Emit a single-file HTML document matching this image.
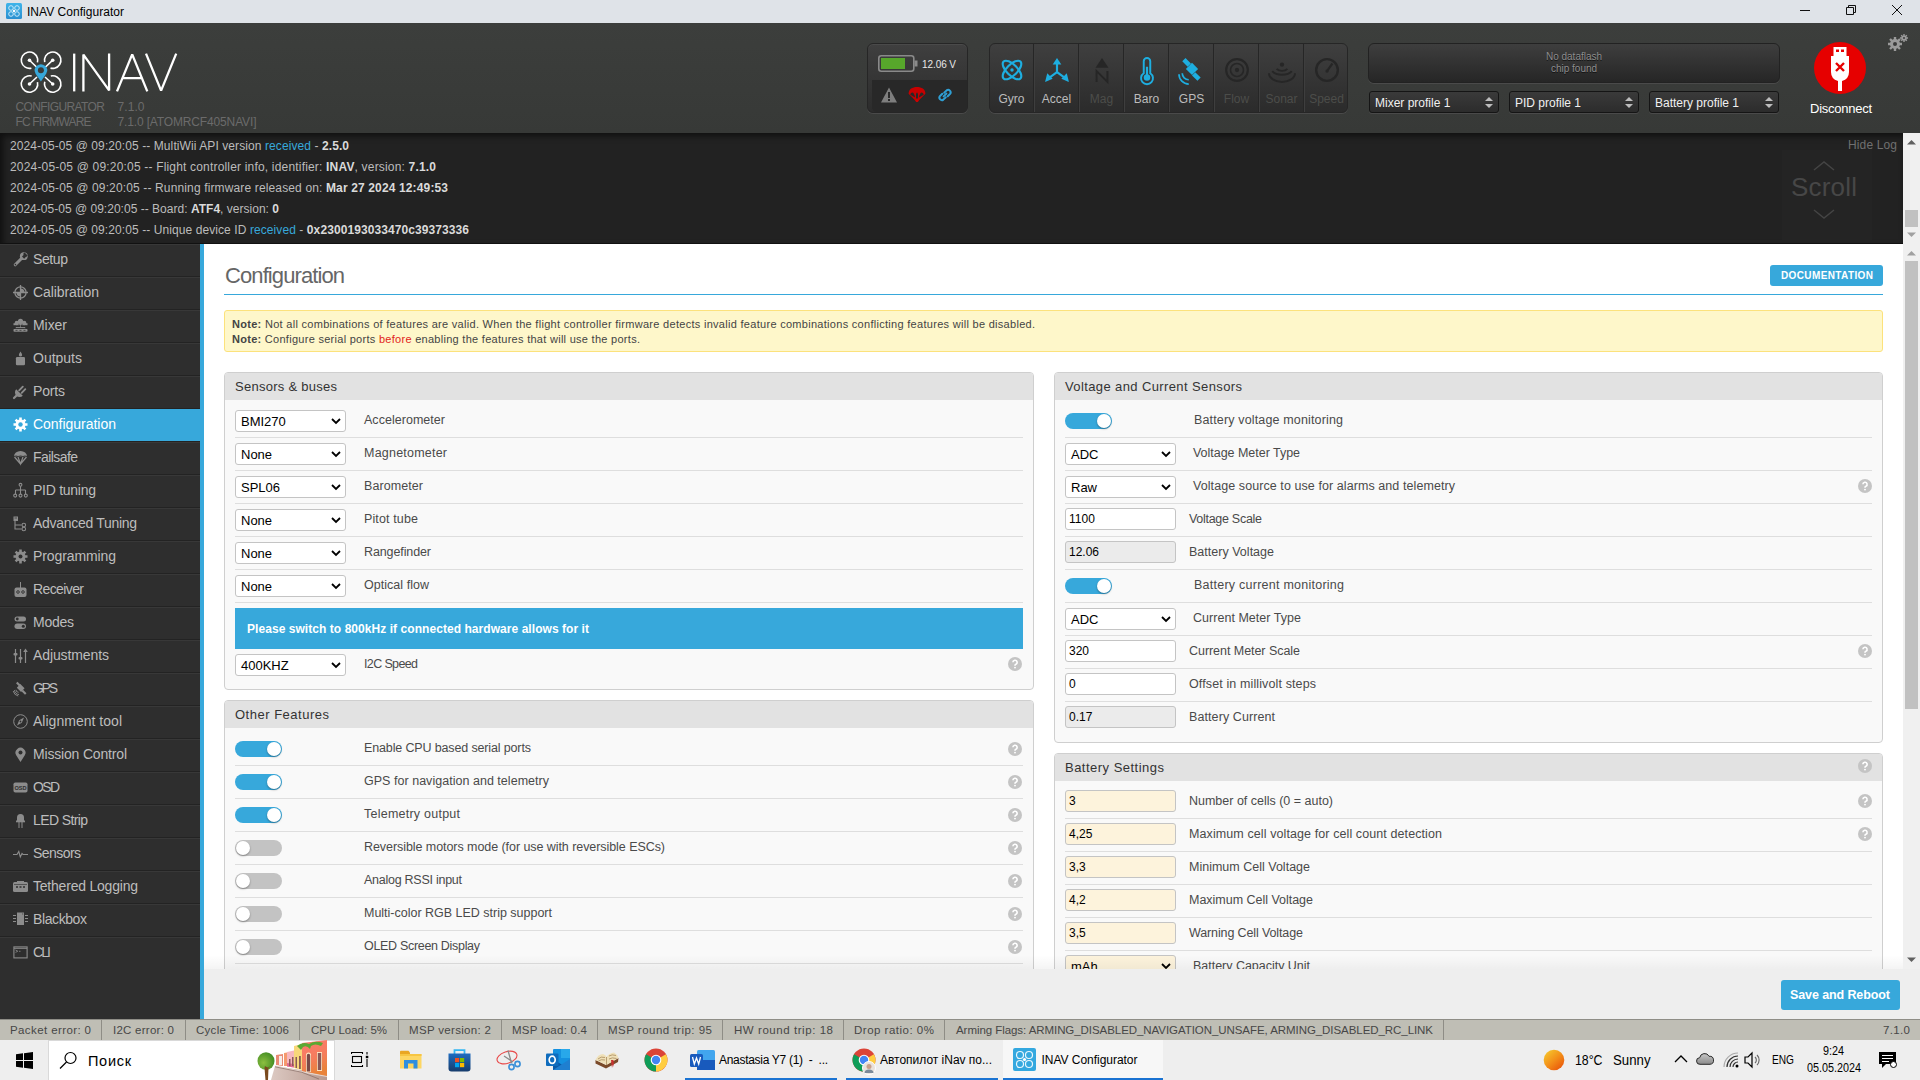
<!DOCTYPE html>
<html><head><meta charset="utf-8"><style>
html,body{margin:0;padding:0;width:1920px;height:1080px;overflow:hidden;background:#fff;font-family:"Liberation Sans",sans-serif;}
.r{position:absolute;}
.t{position:absolute;line-height:1;white-space:nowrap;}
b{font-weight:700}
</style></head><body>
<div class="r" style="left:0px;top:0px;width:1920px;height:23px;background:#dfe3e8"></div>
<svg class="r" style="left:6px;top:3px" width="16" height="16" viewBox="0 0 16 16"><defs><linearGradient id="ig" x1="0" y1="0" x2="0" y2="1"><stop offset="0" stop-color="#3fb4ea"/><stop offset="1" stop-color="#2a8fd0"/></linearGradient></defs><rect x="0" y="0" width="16" height="16" rx="1.5" fill="url(#ig)"/><g fill="none" stroke="#d8f0fb" stroke-width="0.9"><circle cx="5" cy="5" r="2.3"/><circle cx="11" cy="5" r="2.3"/><circle cx="5" cy="11" r="2.3"/><circle cx="11" cy="11" r="2.3"/></g><circle cx="8" cy="8" r="1.2" fill="#fff"/></svg>
<div id="t1" class="t" style="left:27.0px;top:5.84px;font-size:12px;color:#000;letter-spacing:0.031px;">INAV Configurator</div>
<div class="r" style="left:1800px;top:10px;width:10px;height:1px;background:#111"></div>
<svg class="r" style="left:1844px;top:4px" width="14" height="14" viewBox="0 0 14 14"><path d="M2.5 3.5h7v7h-7z M4.5 3.5v-2h7v7h-2" fill="none" stroke="#111" stroke-width="1"/></svg>
<svg class="r" style="left:1892px;top:5px" width="10" height="10" viewBox="0 0 10 10"><path d="M0 0l10 10M10 0l-10 10" stroke="#111" stroke-width="1"/></svg>
<div class="r" style="left:0px;top:23px;width:1920px;height:110px;background:linear-gradient(#3c3e3c,#373937)"></div>
<svg class="r" style="left:15px;top:48px" width="170" height="48" viewBox="15 48 170 48">
<g fill="none" stroke="#fff" stroke-width="1.6">
<circle cx="29.5" cy="60.2" r="8.2" stroke-dasharray="42.5 9.02" transform="rotate(76.6 29.5 60.2)"/>
<circle cx="52.7" cy="60.2" r="8.2" stroke-dasharray="42.5 9.02" transform="rotate(166.6 52.7 60.2)"/>
<circle cx="29.5" cy="84" r="8.2" stroke-dasharray="42.5 9.02" transform="rotate(-13.4 29.5 84)"/>
<circle cx="52.7" cy="84" r="8.2" stroke-dasharray="42.5 9.02" transform="rotate(-103.4 52.7 84)"/>
<path d="M29.5 60.2 L37 67.5 M52.7 60.2 L45 67.5 M29.5 84 L37 77 M52.7 84 L45 77"/>
</g>
<g fill="#fff"><circle cx="29.5" cy="60.2" r="1.8"/><circle cx="52.7" cy="60.2" r="1.8"/><circle cx="29.5" cy="84" r="1.8"/><circle cx="52.7" cy="84" r="1.8"/></g>
<path d="M40.9 81.5 L35.6 73.8 A6.2 6.2 0 1 1 46.2 73.8 Z" fill="#37a8db"/><circle cx="40.9" cy="70.2" r="3" fill="#3a3b3a"/>
<g fill="none" stroke="#fff" stroke-width="2.3" stroke-linejoin="bevel">
<path d="M74.2 53.6V91.4"/><path d="M83.4 91.4V54.6L109.1 90.4V53.6"/><path d="M117 91.4L132.2 54.4L147.3 91.4M122 78.2H142.4"/><path d="M146 53.6L161.1 90.6L176.2 53.6"/>
</g></svg>
<div id="t2" class="t" style="left:15.5px;top:100.84px;font-size:12px;color:#6b6b6b;letter-spacing:-0.612px;">CONFIGURATOR</div>
<div id="t3" class="t" style="left:117.5px;top:100.84px;font-size:12px;color:#6b6b6b;letter-spacing:0.074px;">7.1.0</div>
<div id="t4" class="t" style="left:15.5px;top:115.84px;font-size:12px;color:#6b6b6b;letter-spacing:-0.822px;">FC FIRMWARE</div>
<div id="t5" class="t" style="left:117.5px;top:115.84px;font-size:12px;color:#6b6b6b;letter-spacing:-0.146px;">7.1.0 [ATOMRCF405NAVI]</div>
<div class="r" style="left:867px;top:43px;width:101px;height:70px;border-radius:6px;background:linear-gradient(#3f3f3f,#2c2c2c);box-shadow:inset 0 1px 0 #4a4a4a, 0 1px 0 #4a4a4a;border:1px solid #262626;box-sizing:border-box"></div>
<div class="r" style="left:872px;top:80px;width:95px;height:32px;background:#282828;border-radius:0 0 5px 5px"></div>
<svg class="r" style="left:877px;top:54px" width="42" height="20" viewBox="0 0 42 20"><rect x="1.8" y="1.8" width="35" height="15.5" rx="2.5" fill="none" stroke="#8a8a8a" stroke-width="1.6"/><rect x="37.5" y="6.5" width="3" height="6" fill="#8a8a8a"/><rect x="4" y="4" width="24" height="11" fill="#57a72b"/></svg>
<div id="t6" class="t" style="left:922.0px;top:59.53px;font-size:10px;color:#e8e8e8;letter-spacing:-0.081px;">12.06 V</div>
<svg class="r" style="left:880px;top:87px" width="18" height="16" viewBox="0 0 18 16"><path d="M9 0.5L17 15.5H1Z" fill="#7e7e7e"/><rect x="8" y="5" width="2" height="6" fill="#2a2a2a"/><rect x="8" y="12" width="2" height="2" fill="#2a2a2a"/></svg>
<svg class="r" style="left:908px;top:86px" width="18" height="17" viewBox="0 0 18 17"><path d="M0.6 7.8C0.6 3 4.5 1 9 1C13.5 1 17.4 3 17.4 7.8L9 16.3Z" fill="#c80000"/><g fill="#282828"><path d="M2.3 8.8Q2.6 6.3 4.6 6.4Q6.2 6.6 7.1 11.6Z"/><path d="M8.1 12.6Q7.6 6.4 9 6.4Q10.4 6.4 9.9 12.6Z"/><path d="M15.7 8.8Q15.4 6.3 13.4 6.4Q11.8 6.6 10.9 11.6Z"/></g><circle cx="9" cy="14.6" r="1.5" fill="#d00000"/></svg>
<svg class="r" style="left:937px;top:87px" width="16" height="16" viewBox="0 0 16 16"><g fill="none" stroke="#2f9fd4" stroke-width="2" stroke-linecap="round"><path d="M7.2 5.8L9.6 3.4A2.5 2.5 0 0 1 13.1 6.9L10.7 9.3"/><path d="M8.8 10.2L6.4 12.6A2.5 2.5 0 0 1 2.9 9.1L5.3 6.7"/><path d="M6.6 9.4L9.4 6.6"/></g></svg>
<div class="r" style="left:989px;top:43px;width:359px;height:70px;border-radius:6px;background:linear-gradient(#3f3f3f,#2b2b2b);border:1px solid #262626;box-sizing:border-box;box-shadow:0 1px 0 #4a4a4a"></div>
<div class="r" style="left:1033px;top:44px;width:1px;height:68px;background:#262626"></div>
<div class="r" style="left:1034px;top:44px;width:1px;height:68px;background:#3e3e3e"></div>
<div class="r" style="left:1078px;top:44px;width:1px;height:68px;background:#262626"></div>
<div class="r" style="left:1079px;top:44px;width:1px;height:68px;background:#3e3e3e"></div>
<div class="r" style="left:1123px;top:44px;width:1px;height:68px;background:#262626"></div>
<div class="r" style="left:1124px;top:44px;width:1px;height:68px;background:#3e3e3e"></div>
<div class="r" style="left:1168px;top:44px;width:1px;height:68px;background:#262626"></div>
<div class="r" style="left:1169px;top:44px;width:1px;height:68px;background:#3e3e3e"></div>
<div class="r" style="left:1213px;top:44px;width:1px;height:68px;background:#262626"></div>
<div class="r" style="left:1214px;top:44px;width:1px;height:68px;background:#3e3e3e"></div>
<div class="r" style="left:1258px;top:44px;width:1px;height:68px;background:#262626"></div>
<div class="r" style="left:1259px;top:44px;width:1px;height:68px;background:#3e3e3e"></div>
<div class="r" style="left:1303px;top:44px;width:1px;height:68px;background:#262626"></div>
<div class="r" style="left:1304px;top:44px;width:1px;height:68px;background:#3e3e3e"></div>
<div class="t" style="left:989.0px;top:92.8px;width:45px;text-align:center;font-size:12px;color:#bcbcbc">Gyro</div>
<div class="t" style="left:1034.0px;top:92.8px;width:45px;text-align:center;font-size:12px;color:#bcbcbc">Accel</div>
<div class="t" style="left:1079.0px;top:92.8px;width:45px;text-align:center;font-size:12px;color:#4c4d4a">Mag</div>
<div class="t" style="left:1124.0px;top:92.8px;width:45px;text-align:center;font-size:12px;color:#bcbcbc">Baro</div>
<div class="t" style="left:1169.0px;top:92.8px;width:45px;text-align:center;font-size:12px;color:#bcbcbc">GPS</div>
<div class="t" style="left:1214.0px;top:92.8px;width:45px;text-align:center;font-size:12px;color:#4c4d4a">Flow</div>
<div class="t" style="left:1259.0px;top:92.8px;width:45px;text-align:center;font-size:12px;color:#4c4d4a">Sonar</div>
<div class="t" style="left:1304.0px;top:92.8px;width:45px;text-align:center;font-size:12px;color:#4c4d4a">Speed</div>
<svg class="r" style="left:998.5px;top:57px;overflow:visible" width="26" height="26" viewBox="-1 -1 24 24"><g fill="none" stroke="#1eaee0" stroke-width="2"><ellipse cx="11" cy="11" rx="11" ry="5" transform="rotate(45 11 11)"/><ellipse cx="11" cy="11" rx="11" ry="5" transform="rotate(-45 11 11)"/></g><circle cx="11" cy="11" r="1.6" fill="#1eaee0"/></svg>
<svg class="r" style="left:1043.5px;top:57px;overflow:visible" width="26" height="26" viewBox="-1 -1 24 24"><g fill="#1eaee0"><path d="M11 0L15 6H7Z"/><rect x="10" y="5" width="2" height="9"/><path d="M0 22L2 14L7 19Z"/><path d="M22 22L20 14L15 19Z"/></g><path d="M11 13L4 18M11 13L18 18" stroke="#1eaee0" stroke-width="2"/></svg>
<svg class="r" style="left:1088.5px;top:57px;overflow:visible" width="26" height="26" viewBox="-1 -1 24 24"><path d="M11 0L17 9H5Z" fill="#262626"/><path d="M6 22V12L16 22V12" fill="none" stroke="#262626" stroke-width="1.8"/></svg>
<svg class="r" style="left:1133.5px;top:57px;overflow:visible" width="26" height="26" viewBox="-1 -1 24 24"><path d="M8 14V3a3 3 0 0 1 6 0V14a5.5 5.5 0 1 1-6 0Z" fill="none" stroke="#1eaee0" stroke-width="1.8"/><circle cx="11" cy="18" r="3" fill="#1eaee0"/><rect x="10" y="8" width="2" height="8" fill="#1eaee0"/></svg>
<svg class="r" style="left:1178.5px;top:57px;overflow:visible" width="26" height="26" viewBox="-1 -1 24 24"><g fill="#1eaee0"><path d="M5 0L10 5L7 8L2 3Z"/><rect x="7" y="6" width="8" height="8" transform="rotate(45 11 10)"/><path d="M14 13L19 18L16 21L11 16Z"/></g><path d="M2 14a6 6 0 0 0 6 6M-1 15a9 9 0 0 0 9 9" fill="none" stroke="#1eaee0" stroke-width="1.6"/></svg>
<svg class="r" style="left:1223.5px;top:57px;overflow:visible" width="26" height="26" viewBox="-1 -1 24 24"><circle cx="11" cy="11" r="10" fill="none" stroke="#262626" stroke-width="2"/><circle cx="11" cy="11" r="6" fill="none" stroke="#262626" stroke-width="1.5"/><circle cx="11" cy="11" r="2" fill="#262626"/></svg>
<svg class="r" style="left:1268.5px;top:57px;overflow:visible" width="26" height="26" viewBox="-1 -1 24 24"><circle cx="11" cy="6" r="2" fill="#262626"/><path d="M6 10a6 4 0 0 0 10 0M2 12a10 6 0 0 0 18 0M-1 14a12 8 0 0 0 24 0" fill="none" stroke="#262626" stroke-width="1.8"/></svg>
<svg class="r" style="left:1313.5px;top:57px;overflow:visible" width="26" height="26" viewBox="-1 -1 24 24"><circle cx="11" cy="11" r="10" fill="none" stroke="#262626" stroke-width="2.2"/><path d="M11 12L16 5" stroke="#262626" stroke-width="2"/><circle cx="11" cy="12" r="1.5" fill="#262626"/></svg>
<div class="r" style="left:1368px;top:43px;width:412px;height:40px;border-radius:6px;background:linear-gradient(#3e3e3e,#262626);border:1px solid #222;box-sizing:border-box;box-shadow:0 1px 0 #4a4a4a"></div>
<div class="t" style="left:1368px;top:51px;width:412px;text-align:center;font-size:10px;line-height:12px;color:#8e8e8e;text-shadow:0 1px 0 #111">No dataflash<br>chip found</div>
<div class="r" style="left:1369px;top:91px;width:130px;height:22px;border-radius:3px;background:linear-gradient(#3a3a3a,#2c2c2c);border:1px solid #151515;box-sizing:border-box;box-shadow:0 1px 0 #4a4a4a"></div>
<div id="t7" class="t" style="left:1375.0px;top:96.84px;font-size:12px;color:#f0f0f0;">Mixer profile 1</div>
<svg class="r" style="left:1484px;top:96px" width="10" height="13" viewBox="0 0 10 13"><path d="M1 5L5 1L9 5Z M1 8L5 12L9 8Z" fill="#bdbdbd"/></svg>
<div class="r" style="left:1509px;top:91px;width:130px;height:22px;border-radius:3px;background:linear-gradient(#3a3a3a,#2c2c2c);border:1px solid #151515;box-sizing:border-box;box-shadow:0 1px 0 #4a4a4a"></div>
<div id="t8" class="t" style="left:1515.0px;top:96.84px;font-size:12px;color:#f0f0f0;">PID profile 1</div>
<svg class="r" style="left:1624px;top:96px" width="10" height="13" viewBox="0 0 10 13"><path d="M1 5L5 1L9 5Z M1 8L5 12L9 8Z" fill="#bdbdbd"/></svg>
<div class="r" style="left:1649px;top:91px;width:130px;height:22px;border-radius:3px;background:linear-gradient(#3a3a3a,#2c2c2c);border:1px solid #151515;box-sizing:border-box;box-shadow:0 1px 0 #4a4a4a"></div>
<div id="t9" class="t" style="left:1655.0px;top:96.84px;font-size:12px;color:#f0f0f0;">Battery profile 1</div>
<svg class="r" style="left:1764px;top:96px" width="10" height="13" viewBox="0 0 10 13"><path d="M1 5L5 1L9 5Z M1 8L5 12L9 8Z" fill="#bdbdbd"/></svg>
<svg class="r" style="left:1813px;top:41px" width="54" height="54" viewBox="0 0 54 54"><circle cx="27" cy="27" r="26" fill="#e60000"/><rect x="20.5" y="6" width="13" height="9" fill="#fff"/><rect x="23" y="8.5" width="3" height="2.5" fill="#e60000"/><rect x="28" y="8.5" width="3" height="2.5" fill="#e60000"/><path d="M18 15H36V31Q36 38 29 40V50H25V40Q18 38 18 31Z" fill="#fff"/><path d="M23 22L31 30M31 22L23 30" stroke="#e60000" stroke-width="2.4"/></svg>
<div id="t10" class="t" style="left:1810.0px;top:102.00px;font-size:13px;color:#ffffff;letter-spacing:-0.257px;">Disconnect</div>
<svg class="r" style="left:1887px;top:34px" width="22" height="17" viewBox="0 0 22 17"><g fill="#9a9a9a"><circle cx="8" cy="10" r="5"/><g stroke="#9a9a9a" stroke-width="2.4"><path d="M8 3V17M1 10H15M3 5L13 15M13 5L3 15"/></g><circle cx="17" cy="4" r="2.6"/><g stroke="#9a9a9a" stroke-width="1.4"><path d="M17 0V8M13 4H21M14.2 1.2L19.8 6.8M19.8 1.2L14.2 6.8"/></g></g><circle cx="8" cy="10" r="2" fill="#3b3b3b"/><circle cx="17" cy="4" r="1" fill="#3b3b3b"/></svg>
<div class="r" style="left:0px;top:133px;width:1903px;height:111px;background:#222;box-shadow:inset 3px 3px 6px rgba(0,0,0,.55)"></div>
<div class="r" style="left:0px;top:243px;width:1903px;height:1px;background:#111"></div>
<div id="t11" class="t" style="left:10.0px;top:139.84px;font-size:12px;color:#bcbcbc;letter-spacing:0.087px;">2024-05-05 @ 09:20:05 -- MultiWii API version <span style="color:#37a8db">received</span> - <b style="color:#dadada">2.5.0</b></div>
<div id="t12" class="t" style="left:10.0px;top:160.84px;font-size:12px;color:#bcbcbc;letter-spacing:0.181px;">2024-05-05 @ 09:20:05 -- Flight controller info, identifier: <b style="color:#dadada">INAV</b>, version: <b style="color:#dadada">7.1.0</b></div>
<div id="t13" class="t" style="left:10.0px;top:181.84px;font-size:12px;color:#bcbcbc;letter-spacing:0.138px;">2024-05-05 @ 09:20:05 -- Running firmware released on: <b style="color:#dadada">Mar 27 2024 12:49:53</b></div>
<div id="t14" class="t" style="left:10.0px;top:202.84px;font-size:12px;color:#bcbcbc;letter-spacing:0.019px;">2024-05-05 @ 09:20:05 -- Board: <b style="color:#dadada">ATF4</b>, version: <b style="color:#dadada">0</b></div>
<div id="t15" class="t" style="left:10.0px;top:223.84px;font-size:12px;color:#bcbcbc;letter-spacing:0.085px;">2024-05-05 @ 09:20:05 -- Unique device ID <span style="color:#37a8db">received</span> - <b style="color:#dadada">0x2300193033470c39373336</b></div>
<div id="t16" class="t" style="left:1848.0px;top:138.84px;font-size:12px;color:#707070;letter-spacing:0.136px;">Hide Log</div>
<div class="r" style="left:1782px;top:150px;width:90px;height:90px;background:#242424"></div>
<div id="t17" class="t" style="left:1791.0px;top:173.99px;font-size:26px;color:#474747;letter-spacing:0.197px;">Scroll</div>
<svg class="r" style="left:1812px;top:160px" width="24" height="60" viewBox="0 0 24 60"><path d="M2 10L12 2L22 10M2 50L12 58L22 50" fill="none" stroke="#444" stroke-width="1.5"/></svg>
<div class="r" style="left:1903px;top:133px;width:17px;height:111px;background:#f0f0f0"></div>
<svg class="r" style="left:1906px;top:139px" width="11" height="6" viewBox="0 0 11 6"><path d="M1 5.5L5.5 1L10 5.5Z" fill="#606060"/></svg>
<div class="r" style="left:1905px;top:210px;width:13px;height:17px;background:#c1c1c1"></div>
<svg class="r" style="left:1906px;top:232px" width="11" height="6" viewBox="0 0 11 6"><path d="M1 0.5L5.5 5L10 0.5Z" fill="#a0a0a0"/></svg>
<div class="r" style="left:0px;top:244px;width:200px;height:776px;background:#2e2e2e"></div>
<div class="r" style="left:200px;top:244px;width:4px;height:776px;background:#37a8db"></div>
<div class="r" style="left:0px;top:244px;width:200px;height:1px;background:#383838"></div>
<div class="r" style="left:0px;top:276px;width:200px;height:1px;background:#232323"></div>
<div id="t18" class="t" style="left:33.0px;top:252.15px;font-size:14px;color:#bdbdbd;letter-spacing:-0.398px;">Setup</div>
<svg class="r" style="left:13px;top:252px;overflow:visible" width="15" height="15" viewBox="0 0 15 15"><path d="M2.2 12.8L9 6" stroke="#8c8c8c" stroke-width="3" stroke-linecap="round"/><circle cx="10.8" cy="4.2" r="3.9" fill="#8c8c8c"/><path d="M11.5 0.5L14.5 3.5L13 5L10 2Z" fill="#2e2e2e"/><rect x="10.2" y="1.8" width="3" height="4.5" transform="rotate(45 11.7 4)" fill="#2e2e2e"/><circle cx="2.4" cy="12.6" r="0.8" fill="#2e2e2e"/></svg>
<div class="r" style="left:0px;top:277px;width:200px;height:1px;background:#383838"></div>
<div class="r" style="left:0px;top:309px;width:200px;height:1px;background:#232323"></div>
<div id="t19" class="t" style="left:33.0px;top:285.15px;font-size:14px;color:#bdbdbd;letter-spacing:-0.094px;">Calibration</div>
<svg class="r" style="left:13px;top:285px;overflow:visible" width="15" height="15" viewBox="0 0 15 15"><circle cx="7.5" cy="7.5" r="5.6" fill="none" stroke="#8c8c8c" stroke-width="1.3"/><path d="M0 7.5H15M7.5 0V15" stroke="#8c8c8c" stroke-width="1.3"/><path d="M7.5 7.5V3.5A4 4 0 0 1 11.5 7.5Z M7.5 7.5V11.5A4 4 0 0 1 3.5 7.5Z" fill="#8c8c8c"/></svg>
<div class="r" style="left:0px;top:310px;width:200px;height:1px;background:#383838"></div>
<div class="r" style="left:0px;top:342px;width:200px;height:1px;background:#232323"></div>
<div id="t20" class="t" style="left:33.0px;top:318.15px;font-size:14px;color:#bdbdbd;letter-spacing:-0.059px;">Mixer</div>
<svg class="r" style="left:13px;top:318px;overflow:visible" width="15" height="15" viewBox="0 0 15 15"><g fill="#8c8c8c"><circle cx="7.5" cy="3.3" r="2.6"/><circle cx="3.9" cy="5" r="2.3"/><circle cx="11.1" cy="5" r="2.3"/><rect x="0.5" y="5.2" width="14" height="2"/><rect x="0.5" y="11" width="14" height="2.8" rx="0.8"/></g><path d="M7.5 7V9.6M3 10.2V9.6H12V10.2" fill="none" stroke="#8c8c8c" stroke-width="1"/><path d="M2.5 12.4H4.5M6.5 12.4H8.5M10.5 12.4H12.5" stroke="#2e2e2e" stroke-width="0.7"/><path d="M5.5 6.3L7.5 8L9.5 6.3" fill="none" stroke="#2e2e2e" stroke-width="0.8"/></svg>
<div class="r" style="left:0px;top:343px;width:200px;height:1px;background:#383838"></div>
<div class="r" style="left:0px;top:375px;width:200px;height:1px;background:#232323"></div>
<div id="t21" class="t" style="left:33.0px;top:351.15px;font-size:14px;color:#bdbdbd;letter-spacing:-0.005px;">Outputs</div>
<svg class="r" style="left:13px;top:351px;overflow:visible" width="15" height="15" viewBox="0 0 15 15"><path d="M7.5 0.4Q9.4 3 9.1 4.4Q8.7 5.4 7.5 5.4Q6.3 5.4 5.9 4.4Q5.6 3 7.5 0.4Z" fill="#8c8c8c"/><rect x="2.9" y="6" width="9.1" height="8.3" rx="1.3" fill="#8c8c8c"/></svg>
<div class="r" style="left:0px;top:376px;width:200px;height:1px;background:#383838"></div>
<div class="r" style="left:0px;top:408px;width:200px;height:1px;background:#232323"></div>
<div id="t22" class="t" style="left:33.0px;top:384.15px;font-size:14px;color:#bdbdbd;letter-spacing:-0.172px;">Ports</div>
<svg class="r" style="left:13px;top:384px;overflow:visible" width="15" height="15" viewBox="0 0 15 15"><path d="M3.2 5.2L9.8 11.8A4.67 4.67 0 0 1 3.2 5.2Z" fill="#8c8c8c"/><path d="M1 14L3.8 11.2" stroke="#8c8c8c" stroke-width="2.2" stroke-linecap="round"/><path d="M6.2 6.3L9.8 2.7M8.7 8.8L12.3 5.2" stroke="#8c8c8c" stroke-width="1.9" stroke-linecap="round"/></svg>
<div class="r" style="left:0px;top:409px;width:200px;height:33px;background:#37a8db"></div>
<div class="r" style="left:0px;top:441px;width:200px;height:1px;background:#232323"></div>
<div id="t23" class="t" style="left:33.0px;top:417.15px;font-size:14px;color:#ffffff;letter-spacing:-0.023px;">Configuration</div>
<svg class="r" style="left:13px;top:417px;overflow:visible" width="15" height="15" viewBox="0 0 15 15"><g fill="#ffffff"><circle cx="7.5" cy="7.5" r="5"/><g stroke="#ffffff" stroke-width="2.6"><path d="M7.5 0.5V14.5M0.5 7.5H14.5M2.6 2.6L12.4 12.4M12.4 2.6L2.6 12.4"/></g></g><circle cx="7.5" cy="7.5" r="2.2" fill="#37a8db"/></svg>
<div class="r" style="left:0px;top:442px;width:200px;height:1px;background:#383838"></div>
<div class="r" style="left:0px;top:474px;width:200px;height:1px;background:#232323"></div>
<div id="t24" class="t" style="left:33.0px;top:450.15px;font-size:14px;color:#bdbdbd;letter-spacing:-0.576px;">Failsafe</div>
<svg class="r" style="left:13px;top:450px;overflow:visible" width="15" height="15" viewBox="0 0 15 15"><path d="M1 6.5A6.5 5.5 0 0 1 14 6.5Z" fill="#8c8c8c"/><path d="M1.5 7L7.5 14L13.5 7M5 7L7.5 14L10 7" fill="none" stroke="#8c8c8c" stroke-width="1.2"/><path d="M1 6.5Q3 5.3 5 6.5Q7.5 5.3 10 6.5Q12 5.3 14 6.5" fill="none" stroke="#2e2e2e" stroke-width="0.8"/></svg>
<div class="r" style="left:0px;top:475px;width:200px;height:1px;background:#383838"></div>
<div class="r" style="left:0px;top:507px;width:200px;height:1px;background:#232323"></div>
<div id="t25" class="t" style="left:33.0px;top:483.15px;font-size:14px;color:#bdbdbd;letter-spacing:-0.264px;">PID tuning</div>
<svg class="r" style="left:13px;top:483px;overflow:visible" width="15" height="15" viewBox="0 0 15 15"><g fill="none" stroke="#8c8c8c" stroke-width="1.1"><circle cx="7.5" cy="1.8" r="1.4"/><path d="M7.5 3.2V7M2.5 7H12.5M2.5 7V11M7.5 7V11M12.5 7V11"/><circle cx="2.2" cy="12.6" r="1.5"/><circle cx="7.5" cy="12.6" r="1.5"/><circle cx="12.8" cy="12.6" r="1.5"/></g></svg>
<div class="r" style="left:0px;top:508px;width:200px;height:1px;background:#383838"></div>
<div class="r" style="left:0px;top:540px;width:200px;height:1px;background:#232323"></div>
<div id="t26" class="t" style="left:33.0px;top:516.15px;font-size:14px;color:#bdbdbd;letter-spacing:-0.300px;">Advanced Tuning</div>
<svg class="r" style="left:13px;top:516px;overflow:visible" width="15" height="15" viewBox="0 0 15 15"><rect x="0.5" y="0.5" width="4.5" height="4.5" fill="#8c8c8c"/><path d="M2 5V13H8.5M2 9H8.5" fill="none" stroke="#8c8c8c" stroke-width="1.1"/><circle cx="10.8" cy="9" r="1.8" fill="none" stroke="#8c8c8c" stroke-width="1.1"/><circle cx="10.8" cy="13" r="1.8" fill="none" stroke="#8c8c8c" stroke-width="1.1"/><path d="M1.5 2H4" stroke="#2e2e2e" stroke-width="0.7"/></svg>
<div class="r" style="left:0px;top:541px;width:200px;height:1px;background:#383838"></div>
<div class="r" style="left:0px;top:573px;width:200px;height:1px;background:#232323"></div>
<div id="t27" class="t" style="left:33.0px;top:549.15px;font-size:14px;color:#bdbdbd;letter-spacing:-0.103px;">Programming</div>
<svg class="r" style="left:13px;top:549px;overflow:visible" width="15" height="15" viewBox="0 0 15 15"><g fill="#8c8c8c"><circle cx="7.5" cy="7.5" r="5"/><g stroke="#8c8c8c" stroke-width="2.6"><path d="M7.5 0.5V14.5M0.5 7.5H14.5M2.6 2.6L12.4 12.4M12.4 2.6L2.6 12.4"/></g></g><circle cx="7.5" cy="7.5" r="2" fill="#2e2e2e"/></svg>
<div class="r" style="left:0px;top:574px;width:200px;height:1px;background:#383838"></div>
<div class="r" style="left:0px;top:606px;width:200px;height:1px;background:#232323"></div>
<div id="t28" class="t" style="left:33.0px;top:582.15px;font-size:14px;color:#bdbdbd;letter-spacing:-0.607px;">Receiver</div>
<svg class="r" style="left:13px;top:582px;overflow:visible" width="15" height="15" viewBox="0 0 15 15"><path d="M7.5 0V6" stroke="#8c8c8c" stroke-width="1"/><rect x="1.5" y="5.5" width="12" height="9.5" rx="2" fill="#8c8c8c"/><circle cx="5" cy="10" r="1.3" fill="none" stroke="#2e2e2e" stroke-width="0.9"/><circle cx="10" cy="10" r="1.3" fill="none" stroke="#2e2e2e" stroke-width="0.9"/></svg>
<div class="r" style="left:0px;top:607px;width:200px;height:1px;background:#383838"></div>
<div class="r" style="left:0px;top:639px;width:200px;height:1px;background:#232323"></div>
<div id="t29" class="t" style="left:33.0px;top:615.15px;font-size:14px;color:#bdbdbd;letter-spacing:-0.258px;">Modes</div>
<svg class="r" style="left:13px;top:615px;overflow:visible" width="15" height="15" viewBox="0 0 15 15"><rect x="1.5" y="1.5" width="11.5" height="5" rx="2.5" fill="#8c8c8c"/><rect x="1.5" y="8.5" width="11.5" height="5.5" rx="2.7" fill="#8c8c8c"/><circle cx="4.3" cy="4" r="1.4" fill="#2e2e2e"/><circle cx="10.3" cy="11.2" r="1.5" fill="#2e2e2e"/></svg>
<div class="r" style="left:0px;top:640px;width:200px;height:1px;background:#383838"></div>
<div class="r" style="left:0px;top:672px;width:200px;height:1px;background:#232323"></div>
<div id="t30" class="t" style="left:33.0px;top:648.15px;font-size:14px;color:#bdbdbd;letter-spacing:-0.105px;">Adjustments</div>
<svg class="r" style="left:13px;top:648px;overflow:visible" width="15" height="15" viewBox="0 0 15 15"><path d="M2.5 1V15M7.5 1V15M12.5 3V15" stroke="#8c8c8c" stroke-width="1.2"/><rect x="0.5" y="5" width="4" height="2.5" rx="1" fill="#8c8c8c"/><rect x="5.5" y="9" width="4" height="2.5" rx="1" fill="#8c8c8c"/><path d="M12.5 0.5L14.8 4H10.2Z" fill="#8c8c8c"/></svg>
<div class="r" style="left:0px;top:673px;width:200px;height:1px;background:#383838"></div>
<div class="r" style="left:0px;top:705px;width:200px;height:1px;background:#232323"></div>
<div id="t31" class="t" style="left:33.0px;top:681.15px;font-size:14px;color:#bdbdbd;letter-spacing:-2.289px;">GPS</div>
<svg class="r" style="left:13px;top:681px;overflow:visible" width="15" height="15" viewBox="0 0 15 15"><g fill="#8c8c8c"><path d="M4.5 0.8L7.5 3.8L6 5.3L3 2.3Z"/><rect x="5.2" y="4" width="5" height="6" transform="rotate(-45 7.7 7)"/><path d="M10 8.7L13.5 12.2L12 13.7L8.5 10.2Z"/></g><path d="M1.5 9a4.5 4.5 0 0 0 4.5 4.5M0.2 10a6.5 6.5 0 0 0 5 5M3 8.8a2.5 2.5 0 0 0 2.5 2.5" fill="none" stroke="#8c8c8c" stroke-width="0.9"/></svg>
<div class="r" style="left:0px;top:706px;width:200px;height:1px;background:#383838"></div>
<div class="r" style="left:0px;top:738px;width:200px;height:1px;background:#232323"></div>
<div id="t32" class="t" style="left:33.0px;top:714.15px;font-size:14px;color:#bdbdbd;letter-spacing:0.022px;">Alignment tool</div>
<svg class="r" style="left:13px;top:714px;overflow:visible" width="15" height="15" viewBox="0 0 15 15"><circle cx="7.5" cy="7.5" r="6.8" fill="none" stroke="#8c8c8c" stroke-width="1"/><path d="M11 3.5L8.8 8.8L4 11.5L6.2 6.2Z" fill="#8c8c8c"/><circle cx="7.5" cy="7.5" r="0.9" fill="#2e2e2e"/></svg>
<div class="r" style="left:0px;top:739px;width:200px;height:1px;background:#383838"></div>
<div class="r" style="left:0px;top:771px;width:200px;height:1px;background:#232323"></div>
<div id="t33" class="t" style="left:33.0px;top:747.15px;font-size:14px;color:#bdbdbd;letter-spacing:-0.177px;">Mission Control</div>
<svg class="r" style="left:13px;top:747px;overflow:visible" width="15" height="15" viewBox="0 0 15 15"><path d="M7.5 15L3.2 8.3A5 5 0 1 1 11.8 8.3Z" fill="#8c8c8c"/><circle cx="7.5" cy="5.5" r="2" fill="#2e2e2e"/></svg>
<div class="r" style="left:0px;top:772px;width:200px;height:1px;background:#383838"></div>
<div class="r" style="left:0px;top:804px;width:200px;height:1px;background:#232323"></div>
<div id="t34" class="t" style="left:33.0px;top:780.15px;font-size:14px;color:#bdbdbd;letter-spacing:-1.672px;">OSD</div>
<svg class="r" style="left:13px;top:780px;overflow:visible" width="15" height="15" viewBox="0 0 15 15"><rect x="0.5" y="2.5" width="14" height="10" rx="1.8" fill="#8c8c8c"/><text x="7.5" y="10" font-size="5.6" font-family="Liberation Sans" font-weight="700" text-anchor="middle" fill="#2e2e2e">OSD</text></svg>
<div class="r" style="left:0px;top:805px;width:200px;height:1px;background:#383838"></div>
<div class="r" style="left:0px;top:837px;width:200px;height:1px;background:#232323"></div>
<div id="t35" class="t" style="left:33.0px;top:813.15px;font-size:14px;color:#bdbdbd;letter-spacing:-0.615px;">LED Strip</div>
<svg class="r" style="left:13px;top:813px;overflow:visible" width="15" height="15" viewBox="0 0 15 15"><path d="M4 8V4.5A3.5 3.5 0 0 1 11 4.5V8Z" fill="#8c8c8c"/><rect x="3" y="7.5" width="9" height="1.8" fill="#8c8c8c"/><path d="M6 9V15M9 9V15" stroke="#8c8c8c" stroke-width="1"/></svg>
<div class="r" style="left:0px;top:838px;width:200px;height:1px;background:#383838"></div>
<div class="r" style="left:0px;top:870px;width:200px;height:1px;background:#232323"></div>
<div id="t36" class="t" style="left:33.0px;top:846.15px;font-size:14px;color:#bdbdbd;letter-spacing:-0.560px;">Sensors</div>
<svg class="r" style="left:13px;top:846px;overflow:visible" width="15" height="15" viewBox="0 0 15 15"><path d="M0 8.5H4L5.8 5.5L7.3 11L9 7.5L10 8.5H15" fill="none" stroke="#8c8c8c" stroke-width="1.1"/></svg>
<div class="r" style="left:0px;top:871px;width:200px;height:1px;background:#383838"></div>
<div class="r" style="left:0px;top:903px;width:200px;height:1px;background:#232323"></div>
<div id="t37" class="t" style="left:33.0px;top:879.15px;font-size:14px;color:#bdbdbd;letter-spacing:-0.214px;">Tethered Logging</div>
<svg class="r" style="left:13px;top:879px;overflow:visible" width="15" height="15" viewBox="0 0 15 15"><rect x="0" y="3" width="15" height="10" rx="1.5" fill="#8c8c8c"/><rect x="4" y="2" width="7" height="2" fill="#8c8c8c"/><path d="M3 8H5M6.5 8H8.5M10 8H12" stroke="#2e2e2e" stroke-width="1.4"/><path d="M1 5.5H14" stroke="#2e2e2e" stroke-width="0.6"/></svg>
<div class="r" style="left:0px;top:904px;width:200px;height:1px;background:#383838"></div>
<div class="r" style="left:0px;top:936px;width:200px;height:1px;background:#232323"></div>
<div id="t38" class="t" style="left:33.0px;top:912.15px;font-size:14px;color:#bdbdbd;letter-spacing:-0.402px;">Blackbox</div>
<svg class="r" style="left:13px;top:912px;overflow:visible" width="15" height="15" viewBox="0 0 15 15"><rect x="4" y="0.5" width="7" height="12.5" fill="#8c8c8c"/><path d="M0 3.5H3M0 6.5H3M0 9.5H3M12 3.5H15M12 6.5H15M12 9.5H15" stroke="#8c8c8c" stroke-width="1.2"/><path d="M9.7 1.3V2.6" stroke="#2e2e2e" stroke-width="0.6"/></svg>
<div class="r" style="left:0px;top:937px;width:200px;height:1px;background:#383838"></div>
<div id="t39" class="t" style="left:33.0px;top:945.15px;font-size:14px;color:#bdbdbd;letter-spacing:-1.898px;">CLI</div>
<svg class="r" style="left:13px;top:945px;overflow:visible" width="15" height="15" viewBox="0 0 15 15"><rect x="0.9" y="1.9" width="13.2" height="11" fill="none" stroke="#8c8c8c" stroke-width="1.1"/><path d="M1 3.3H14" stroke="#8c8c8c" stroke-width="1"/><path d="M2.5 5L4.8 6.2L2.5 7.4M6 6.3H7.5" fill="none" stroke="#8c8c8c" stroke-width="0.8"/></svg>
<div class="r" style="left:204px;top:244px;width:1699px;height:725px;background:#fff"></div>
<div id="t40" class="t" style="left:225.0px;top:264.88px;font-size:22px;color:#666;letter-spacing:-0.906px;">Configuration</div>
<div class="r" style="left:1770px;top:265px;width:113px;height:21px;background:#37a8db;border-radius:3px"></div>
<div id="t41" class="t" style="left:1781.0px;top:271.04px;font-size:10px;color:#fff;font-weight:700;letter-spacing:0.383px;">DOCUMENTATION</div>
<div class="r" style="left:224px;top:294px;width:1659px;height:1px;background:#37a8db"></div>
<div class="r" style="left:224px;top:310px;width:1659px;height:42px;background:#fef7ca;border:1px solid #fce27c;border-radius:3px;box-sizing:border-box"></div>
<div id="t42" class="t" style="left:232.0px;top:318.69px;font-size:11px;color:#444;letter-spacing:0.292px;"><b>Note:</b> Not all combinations of features are valid. When the flight controller firmware detects invalid feature combinations conflicting features will be disabled.</div>
<div id="t43" class="t" style="left:232.0px;top:333.69px;font-size:11px;color:#444;letter-spacing:0.281px;"><b>Note:</b> Configure serial ports <span style="color:#e2231a">before</span> enabling the features that will use the ports.</div>
<div class="r" style="left:204px;top:244px;width:1699px;height:725px;overflow:hidden">
<div class="r" style="left:-204px;top:-244px;width:1920px;height:1080px">
<div class="r" style="left:224px;top:372px;width:810px;height:318px;background:#f9f9f9;border:1px solid #cfcfcf;border-radius:4px;box-sizing:border-box;overflow:hidden"></div>
<div class="r" style="left:225px;top:373px;width:808px;height:27px;background:#e2e2e2;border-radius:3px 3px 0 0"></div>
<div id="t44" class="t" style="left:235.0px;top:380.00px;font-size:13px;color:#333;letter-spacing:0.266px;">Sensors &amp; buses</div>
<div class="r" style="left:235px;top:410px;width:111px;height:22px;background:#fff;border:1px solid #c4c4c4;border-radius:3px;box-sizing:border-box"></div>
<div id="t45" class="t" style="left:241.0px;top:415.00px;font-size:13px;color:#000;">BMI270</div>
<svg class="r" style="left:331px;top:418px" width="10" height="7" viewBox="0 0 10 7"><path d="M1 1L5 5L9 1" fill="none" stroke="#000" stroke-width="1.8"/></svg>
<div id="t46" class="t" style="left:364.0px;top:414.42px;font-size:12.5px;color:#4a4a4a;letter-spacing:0.034px;">Accelerometer</div>
<div class="r" style="left:235px;top:437px;width:788px;height:1px;background:#dedede"></div>
<div class="r" style="left:235px;top:443px;width:111px;height:22px;background:#fff;border:1px solid #c4c4c4;border-radius:3px;box-sizing:border-box"></div>
<div id="t47" class="t" style="left:241.0px;top:448.00px;font-size:13px;color:#000;">None</div>
<svg class="r" style="left:331px;top:451px" width="10" height="7" viewBox="0 0 10 7"><path d="M1 1L5 5L9 1" fill="none" stroke="#000" stroke-width="1.8"/></svg>
<div id="t48" class="t" style="left:364.0px;top:447.42px;font-size:12.5px;color:#4a4a4a;letter-spacing:0.217px;">Magnetometer</div>
<div class="r" style="left:235px;top:470px;width:788px;height:1px;background:#dedede"></div>
<div class="r" style="left:235px;top:476px;width:111px;height:22px;background:#fff;border:1px solid #c4c4c4;border-radius:3px;box-sizing:border-box"></div>
<div id="t49" class="t" style="left:241.0px;top:481.00px;font-size:13px;color:#000;">SPL06</div>
<svg class="r" style="left:331px;top:484px" width="10" height="7" viewBox="0 0 10 7"><path d="M1 1L5 5L9 1" fill="none" stroke="#000" stroke-width="1.8"/></svg>
<div id="t50" class="t" style="left:364.0px;top:480.42px;font-size:12.5px;color:#4a4a4a;letter-spacing:0.080px;">Barometer</div>
<div class="r" style="left:235px;top:503px;width:788px;height:1px;background:#dedede"></div>
<div class="r" style="left:235px;top:509px;width:111px;height:22px;background:#fff;border:1px solid #c4c4c4;border-radius:3px;box-sizing:border-box"></div>
<div id="t51" class="t" style="left:241.0px;top:514.00px;font-size:13px;color:#000;">None</div>
<svg class="r" style="left:331px;top:517px" width="10" height="7" viewBox="0 0 10 7"><path d="M1 1L5 5L9 1" fill="none" stroke="#000" stroke-width="1.8"/></svg>
<div id="t52" class="t" style="left:364.0px;top:513.42px;font-size:12.5px;color:#4a4a4a;letter-spacing:0.130px;">Pitot tube</div>
<div class="r" style="left:235px;top:536px;width:788px;height:1px;background:#dedede"></div>
<div class="r" style="left:235px;top:542px;width:111px;height:22px;background:#fff;border:1px solid #c4c4c4;border-radius:3px;box-sizing:border-box"></div>
<div id="t53" class="t" style="left:241.0px;top:547.00px;font-size:13px;color:#000;">None</div>
<svg class="r" style="left:331px;top:550px" width="10" height="7" viewBox="0 0 10 7"><path d="M1 1L5 5L9 1" fill="none" stroke="#000" stroke-width="1.8"/></svg>
<div id="t54" class="t" style="left:364.0px;top:546.42px;font-size:12.5px;color:#4a4a4a;letter-spacing:-0.111px;">Rangefinder</div>
<div class="r" style="left:235px;top:569px;width:788px;height:1px;background:#dedede"></div>
<div class="r" style="left:235px;top:575px;width:111px;height:22px;background:#fff;border:1px solid #c4c4c4;border-radius:3px;box-sizing:border-box"></div>
<div id="t55" class="t" style="left:241.0px;top:580.00px;font-size:13px;color:#000;">None</div>
<svg class="r" style="left:331px;top:583px" width="10" height="7" viewBox="0 0 10 7"><path d="M1 1L5 5L9 1" fill="none" stroke="#000" stroke-width="1.8"/></svg>
<div id="t56" class="t" style="left:364.0px;top:579.42px;font-size:12.5px;color:#4a4a4a;letter-spacing:0.036px;">Optical flow</div>
<div class="r" style="left:235px;top:602px;width:788px;height:1px;background:#dedede"></div>
<div class="r" style="left:235px;top:608px;width:788px;height:41px;background:#37a8db"></div>
<div id="t57" class="t" style="left:247.0px;top:622.84px;font-size:12px;color:#fff;font-weight:700;letter-spacing:0.055px;">Please switch to 800kHz if connected hardware allows for it</div>
<div class="r" style="left:235px;top:654px;width:111px;height:22px;background:#fff;border:1px solid #c4c4c4;border-radius:3px;box-sizing:border-box"></div>
<div id="t58" class="t" style="left:241.0px;top:659.00px;font-size:13px;color:#000;">400KHZ</div>
<svg class="r" style="left:331px;top:662px" width="10" height="7" viewBox="0 0 10 7"><path d="M1 1L5 5L9 1" fill="none" stroke="#000" stroke-width="1.8"/></svg>
<div id="t59" class="t" style="left:364.0px;top:658.42px;font-size:12.5px;color:#4a4a4a;letter-spacing:-0.635px;">I2C Speed</div>
<svg class="r" style="left:1008px;top:657px" width="14" height="14" viewBox="0 0 14 14"><circle cx="7" cy="7" r="7" fill="#c4c4c4"/><path d="M4.9 5.3a2.1 2.1 0 1 1 3 1.9c-.7.3-.9.6-.9 1.3v.3" fill="none" stroke="#fff" stroke-width="1.6"/><circle cx="7" cy="10.6" r="0.95" fill="#fff"/></svg>
<div class="r" style="left:224px;top:700px;width:810px;height:400px;background:#f9f9f9;border:1px solid #cfcfcf;border-radius:4px;box-sizing:border-box;overflow:hidden"></div>
<div class="r" style="left:225px;top:701px;width:808px;height:27px;background:#e2e2e2;border-radius:3px 3px 0 0"></div>
<div id="t60" class="t" style="left:235.0px;top:708.00px;font-size:13px;color:#333;letter-spacing:0.505px;">Other Features</div>
<div class="r" style="left:235px;top:741px;width:47px;height:16px;background:#37a8db;border-radius:8px"></div>
<div class="r" style="left:267px;top:742px;width:14px;height:14px;background:#fff;border-radius:50%;box-shadow:0 1px 2px rgba(0,0,0,.35)"></div>
<div id="t61" class="t" style="left:364.0px;top:742.42px;font-size:12.5px;color:#4a4a4a;letter-spacing:-0.141px;">Enable CPU based serial ports</div>
<svg class="r" style="left:1008px;top:742px" width="14" height="14" viewBox="0 0 14 14"><circle cx="7" cy="7" r="7" fill="#c4c4c4"/><path d="M4.9 5.3a2.1 2.1 0 1 1 3 1.9c-.7.3-.9.6-.9 1.3v.3" fill="none" stroke="#fff" stroke-width="1.6"/><circle cx="7" cy="10.6" r="0.95" fill="#fff"/></svg>
<div class="r" style="left:235px;top:765px;width:788px;height:1px;background:#dedede"></div>
<div class="r" style="left:235px;top:774px;width:47px;height:16px;background:#37a8db;border-radius:8px"></div>
<div class="r" style="left:267px;top:775px;width:14px;height:14px;background:#fff;border-radius:50%;box-shadow:0 1px 2px rgba(0,0,0,.35)"></div>
<div id="t62" class="t" style="left:364.0px;top:775.42px;font-size:12.5px;color:#4a4a4a;letter-spacing:0.028px;">GPS for navigation and telemetry</div>
<svg class="r" style="left:1008px;top:775px" width="14" height="14" viewBox="0 0 14 14"><circle cx="7" cy="7" r="7" fill="#c4c4c4"/><path d="M4.9 5.3a2.1 2.1 0 1 1 3 1.9c-.7.3-.9.6-.9 1.3v.3" fill="none" stroke="#fff" stroke-width="1.6"/><circle cx="7" cy="10.6" r="0.95" fill="#fff"/></svg>
<div class="r" style="left:235px;top:798px;width:788px;height:1px;background:#dedede"></div>
<div class="r" style="left:235px;top:807px;width:47px;height:16px;background:#37a8db;border-radius:8px"></div>
<div class="r" style="left:267px;top:808px;width:14px;height:14px;background:#fff;border-radius:50%;box-shadow:0 1px 2px rgba(0,0,0,.35)"></div>
<div id="t63" class="t" style="left:364.0px;top:808.42px;font-size:12.5px;color:#4a4a4a;letter-spacing:0.239px;">Telemetry output</div>
<svg class="r" style="left:1008px;top:808px" width="14" height="14" viewBox="0 0 14 14"><circle cx="7" cy="7" r="7" fill="#c4c4c4"/><path d="M4.9 5.3a2.1 2.1 0 1 1 3 1.9c-.7.3-.9.6-.9 1.3v.3" fill="none" stroke="#fff" stroke-width="1.6"/><circle cx="7" cy="10.6" r="0.95" fill="#fff"/></svg>
<div class="r" style="left:235px;top:831px;width:788px;height:1px;background:#dedede"></div>
<div class="r" style="left:235px;top:840px;width:47px;height:16px;background:#c3c3c3;border-radius:8px"></div>
<div class="r" style="left:236px;top:841px;width:14px;height:14px;background:#fff;border-radius:50%;box-shadow:0 1px 2px rgba(0,0,0,.35)"></div>
<div id="t64" class="t" style="left:364.0px;top:841.42px;font-size:12.5px;color:#4a4a4a;letter-spacing:-0.063px;">Reversible motors mode (for use with reversible ESCs)</div>
<svg class="r" style="left:1008px;top:841px" width="14" height="14" viewBox="0 0 14 14"><circle cx="7" cy="7" r="7" fill="#c4c4c4"/><path d="M4.9 5.3a2.1 2.1 0 1 1 3 1.9c-.7.3-.9.6-.9 1.3v.3" fill="none" stroke="#fff" stroke-width="1.6"/><circle cx="7" cy="10.6" r="0.95" fill="#fff"/></svg>
<div class="r" style="left:235px;top:864px;width:788px;height:1px;background:#dedede"></div>
<div class="r" style="left:235px;top:873px;width:47px;height:16px;background:#c3c3c3;border-radius:8px"></div>
<div class="r" style="left:236px;top:874px;width:14px;height:14px;background:#fff;border-radius:50%;box-shadow:0 1px 2px rgba(0,0,0,.35)"></div>
<div id="t65" class="t" style="left:364.0px;top:874.42px;font-size:12.5px;color:#4a4a4a;letter-spacing:-0.260px;">Analog RSSI input</div>
<svg class="r" style="left:1008px;top:874px" width="14" height="14" viewBox="0 0 14 14"><circle cx="7" cy="7" r="7" fill="#c4c4c4"/><path d="M4.9 5.3a2.1 2.1 0 1 1 3 1.9c-.7.3-.9.6-.9 1.3v.3" fill="none" stroke="#fff" stroke-width="1.6"/><circle cx="7" cy="10.6" r="0.95" fill="#fff"/></svg>
<div class="r" style="left:235px;top:897px;width:788px;height:1px;background:#dedede"></div>
<div class="r" style="left:235px;top:906px;width:47px;height:16px;background:#c3c3c3;border-radius:8px"></div>
<div class="r" style="left:236px;top:907px;width:14px;height:14px;background:#fff;border-radius:50%;box-shadow:0 1px 2px rgba(0,0,0,.35)"></div>
<div id="t66" class="t" style="left:364.0px;top:907.42px;font-size:12.5px;color:#4a4a4a;letter-spacing:-0.008px;">Multi-color RGB LED strip support</div>
<svg class="r" style="left:1008px;top:907px" width="14" height="14" viewBox="0 0 14 14"><circle cx="7" cy="7" r="7" fill="#c4c4c4"/><path d="M4.9 5.3a2.1 2.1 0 1 1 3 1.9c-.7.3-.9.6-.9 1.3v.3" fill="none" stroke="#fff" stroke-width="1.6"/><circle cx="7" cy="10.6" r="0.95" fill="#fff"/></svg>
<div class="r" style="left:235px;top:930px;width:788px;height:1px;background:#dedede"></div>
<div class="r" style="left:235px;top:939px;width:47px;height:16px;background:#c3c3c3;border-radius:8px"></div>
<div class="r" style="left:236px;top:940px;width:14px;height:14px;background:#fff;border-radius:50%;box-shadow:0 1px 2px rgba(0,0,0,.35)"></div>
<div id="t67" class="t" style="left:364.0px;top:940.42px;font-size:12.5px;color:#4a4a4a;letter-spacing:-0.310px;">OLED Screen Display</div>
<svg class="r" style="left:1008px;top:940px" width="14" height="14" viewBox="0 0 14 14"><circle cx="7" cy="7" r="7" fill="#c4c4c4"/><path d="M4.9 5.3a2.1 2.1 0 1 1 3 1.9c-.7.3-.9.6-.9 1.3v.3" fill="none" stroke="#fff" stroke-width="1.6"/><circle cx="7" cy="10.6" r="0.95" fill="#fff"/></svg>
<div class="r" style="left:235px;top:963px;width:788px;height:1px;background:#dedede"></div>
<div class="r" style="left:235px;top:972px;width:47px;height:16px;background:#c3c3c3;border-radius:8px"></div>
<div class="r" style="left:236px;top:973px;width:14px;height:14px;background:#fff;border-radius:50%;box-shadow:0 1px 2px rgba(0,0,0,.35)"></div>
<div id="t68" class="t" style="left:364.0px;top:973.42px;font-size:12.5px;color:#4a4a4a;letter-spacing:0.217px;">Blackbox recording</div>
<svg class="r" style="left:1008px;top:973px" width="14" height="14" viewBox="0 0 14 14"><circle cx="7" cy="7" r="7" fill="#c4c4c4"/><path d="M4.9 5.3a2.1 2.1 0 1 1 3 1.9c-.7.3-.9.6-.9 1.3v.3" fill="none" stroke="#fff" stroke-width="1.6"/><circle cx="7" cy="10.6" r="0.95" fill="#fff"/></svg>
<div class="r" style="left:235px;top:996px;width:788px;height:1px;background:#dedede"></div>
<div class="r" style="left:1054px;top:372px;width:829px;height:371px;background:#f9f9f9;border:1px solid #cfcfcf;border-radius:4px;box-sizing:border-box;overflow:hidden"></div>
<div class="r" style="left:1055px;top:373px;width:827px;height:27px;background:#e2e2e2;border-radius:3px 3px 0 0"></div>
<div id="t69" class="t" style="left:1065.0px;top:380.00px;font-size:13px;color:#333;letter-spacing:0.387px;">Voltage and Current Sensors</div>
<div class="r" style="left:1065px;top:413px;width:47px;height:16px;background:#37a8db;border-radius:8px"></div>
<div class="r" style="left:1097px;top:414px;width:14px;height:14px;background:#fff;border-radius:50%;box-shadow:0 1px 2px rgba(0,0,0,.35)"></div>
<div id="t70" class="t" style="left:1194.0px;top:414.42px;font-size:12.5px;color:#4a4a4a;letter-spacing:0.151px;">Battery voltage monitoring</div>
<div class="r" style="left:1065px;top:437px;width:807px;height:1px;background:#dedede"></div>
<div class="r" style="left:1065px;top:443px;width:111px;height:22px;background:#fff;border:1px solid #c4c4c4;border-radius:3px;box-sizing:border-box"></div>
<div id="t71" class="t" style="left:1071.0px;top:448.00px;font-size:13px;color:#000;">ADC</div>
<svg class="r" style="left:1161px;top:451px" width="10" height="7" viewBox="0 0 10 7"><path d="M1 1L5 5L9 1" fill="none" stroke="#000" stroke-width="1.8"/></svg>
<div id="t72" class="t" style="left:1193.0px;top:447.42px;font-size:12.5px;color:#4a4a4a;letter-spacing:-0.028px;">Voltage Meter Type</div>
<div class="r" style="left:1065px;top:470px;width:807px;height:1px;background:#dedede"></div>
<div class="r" style="left:1065px;top:476px;width:111px;height:22px;background:#fff;border:1px solid #c4c4c4;border-radius:3px;box-sizing:border-box"></div>
<div id="t73" class="t" style="left:1071.0px;top:481.00px;font-size:13px;color:#000;">Raw</div>
<svg class="r" style="left:1161px;top:484px" width="10" height="7" viewBox="0 0 10 7"><path d="M1 1L5 5L9 1" fill="none" stroke="#000" stroke-width="1.8"/></svg>
<div id="t74" class="t" style="left:1193.0px;top:480.42px;font-size:12.5px;color:#4a4a4a;letter-spacing:0.078px;">Voltage source to use for alarms and telemetry</div>
<div class="r" style="left:1065px;top:503px;width:807px;height:1px;background:#dedede"></div>
<div class="r" style="left:1065px;top:508px;width:111px;height:22px;background:#fff;border:1px solid #c4c4c4;border-radius:3px;box-sizing:border-box"></div>
<div id="t75" class="t" style="left:1069.0px;top:513.34px;font-size:12px;color:#000;">1100</div>
<div id="t76" class="t" style="left:1189.0px;top:513.42px;font-size:12.5px;color:#4a4a4a;letter-spacing:-0.288px;">Voltage Scale</div>
<div class="r" style="left:1065px;top:536px;width:807px;height:1px;background:#dedede"></div>
<div class="r" style="left:1065px;top:541px;width:111px;height:22px;background:#ebebeb;border:1px solid #c4c4c4;border-radius:3px;box-sizing:border-box"></div>
<div id="t77" class="t" style="left:1069.0px;top:546.34px;font-size:12px;color:#000;">12.06</div>
<div id="t78" class="t" style="left:1189.0px;top:546.42px;font-size:12.5px;color:#4a4a4a;letter-spacing:0.016px;">Battery Voltage</div>
<div class="r" style="left:1065px;top:569px;width:807px;height:1px;background:#dedede"></div>
<div class="r" style="left:1065px;top:578px;width:47px;height:16px;background:#37a8db;border-radius:8px"></div>
<div class="r" style="left:1097px;top:579px;width:14px;height:14px;background:#fff;border-radius:50%;box-shadow:0 1px 2px rgba(0,0,0,.35)"></div>
<div id="t79" class="t" style="left:1194.0px;top:579.42px;font-size:12.5px;color:#4a4a4a;letter-spacing:0.247px;">Battery current monitoring</div>
<div class="r" style="left:1065px;top:602px;width:807px;height:1px;background:#dedede"></div>
<div class="r" style="left:1065px;top:608px;width:111px;height:22px;background:#fff;border:1px solid #c4c4c4;border-radius:3px;box-sizing:border-box"></div>
<div id="t80" class="t" style="left:1071.0px;top:613.00px;font-size:13px;color:#000;">ADC</div>
<svg class="r" style="left:1161px;top:616px" width="10" height="7" viewBox="0 0 10 7"><path d="M1 1L5 5L9 1" fill="none" stroke="#000" stroke-width="1.8"/></svg>
<div id="t81" class="t" style="left:1193.0px;top:612.42px;font-size:12.5px;color:#4a4a4a;letter-spacing:0.032px;">Current Meter Type</div>
<div class="r" style="left:1065px;top:635px;width:807px;height:1px;background:#dedede"></div>
<div class="r" style="left:1065px;top:640px;width:111px;height:22px;background:#fff;border:1px solid #c4c4c4;border-radius:3px;box-sizing:border-box"></div>
<div id="t82" class="t" style="left:1069.0px;top:645.34px;font-size:12px;color:#000;">320</div>
<div id="t83" class="t" style="left:1189.0px;top:645.42px;font-size:12.5px;color:#4a4a4a;letter-spacing:-0.048px;">Current Meter Scale</div>
<div class="r" style="left:1065px;top:668px;width:807px;height:1px;background:#dedede"></div>
<div class="r" style="left:1065px;top:673px;width:111px;height:22px;background:#fff;border:1px solid #c4c4c4;border-radius:3px;box-sizing:border-box"></div>
<div id="t84" class="t" style="left:1069.0px;top:678.34px;font-size:12px;color:#000;">0</div>
<div id="t85" class="t" style="left:1189.0px;top:678.42px;font-size:12.5px;color:#4a4a4a;letter-spacing:0.120px;">Offset in millivolt steps</div>
<div class="r" style="left:1065px;top:701px;width:807px;height:1px;background:#dedede"></div>
<div class="r" style="left:1065px;top:706px;width:111px;height:22px;background:#ebebeb;border:1px solid #c4c4c4;border-radius:3px;box-sizing:border-box"></div>
<div id="t86" class="t" style="left:1069.0px;top:711.34px;font-size:12px;color:#000;">0.17</div>
<div id="t87" class="t" style="left:1189.0px;top:711.42px;font-size:12.5px;color:#4a4a4a;letter-spacing:0.088px;">Battery Current</div>
<svg class="r" style="left:1858px;top:479px" width="14" height="14" viewBox="0 0 14 14"><circle cx="7" cy="7" r="7" fill="#c4c4c4"/><path d="M4.9 5.3a2.1 2.1 0 1 1 3 1.9c-.7.3-.9.6-.9 1.3v.3" fill="none" stroke="#fff" stroke-width="1.6"/><circle cx="7" cy="10.6" r="0.95" fill="#fff"/></svg>
<svg class="r" style="left:1858px;top:644px" width="14" height="14" viewBox="0 0 14 14"><circle cx="7" cy="7" r="7" fill="#c4c4c4"/><path d="M4.9 5.3a2.1 2.1 0 1 1 3 1.9c-.7.3-.9.6-.9 1.3v.3" fill="none" stroke="#fff" stroke-width="1.6"/><circle cx="7" cy="10.6" r="0.95" fill="#fff"/></svg>
<div class="r" style="left:1054px;top:753px;width:829px;height:300px;background:#f9f9f9;border:1px solid #cfcfcf;border-radius:4px;box-sizing:border-box;overflow:hidden"></div>
<div class="r" style="left:1055px;top:754px;width:827px;height:27px;background:#e2e2e2;border-radius:3px 3px 0 0"></div>
<div id="t88" class="t" style="left:1065.0px;top:761.00px;font-size:13px;color:#333;letter-spacing:0.481px;">Battery Settings</div>
<svg class="r" style="left:1858px;top:759px" width="14" height="14" viewBox="0 0 14 14"><circle cx="7" cy="7" r="7" fill="#c4c4c4"/><path d="M4.9 5.3a2.1 2.1 0 1 1 3 1.9c-.7.3-.9.6-.9 1.3v.3" fill="none" stroke="#fff" stroke-width="1.6"/><circle cx="7" cy="10.6" r="0.95" fill="#fff"/></svg>
<div class="r" style="left:1065px;top:790px;width:111px;height:22px;background:#fdf3dc;border:1px solid #c4c4c4;border-radius:3px;box-sizing:border-box"></div>
<div id="t89" class="t" style="left:1069.0px;top:795.34px;font-size:12px;color:#000;">3</div>
<div id="t90" class="t" style="left:1189.0px;top:795.42px;font-size:12.5px;color:#4a4a4a;letter-spacing:-0.007px;">Number of cells (0 = auto)</div>
<div class="r" style="left:1065px;top:818px;width:807px;height:1px;background:#dedede"></div>
<div class="r" style="left:1065px;top:823px;width:111px;height:22px;background:#fdf3dc;border:1px solid #c4c4c4;border-radius:3px;box-sizing:border-box"></div>
<div id="t91" class="t" style="left:1069.0px;top:828.34px;font-size:12px;color:#000;">4,25</div>
<div id="t92" class="t" style="left:1189.0px;top:828.42px;font-size:12.5px;color:#4a4a4a;letter-spacing:0.097px;">Maximum cell voltage for cell count detection</div>
<div class="r" style="left:1065px;top:851px;width:807px;height:1px;background:#dedede"></div>
<div class="r" style="left:1065px;top:856px;width:111px;height:22px;background:#fdf3dc;border:1px solid #c4c4c4;border-radius:3px;box-sizing:border-box"></div>
<div id="t93" class="t" style="left:1069.0px;top:861.34px;font-size:12px;color:#000;">3,3</div>
<div id="t94" class="t" style="left:1189.0px;top:861.42px;font-size:12.5px;color:#4a4a4a;letter-spacing:0.006px;">Minimum Cell Voltage</div>
<div class="r" style="left:1065px;top:884px;width:807px;height:1px;background:#dedede"></div>
<div class="r" style="left:1065px;top:889px;width:111px;height:22px;background:#fdf3dc;border:1px solid #c4c4c4;border-radius:3px;box-sizing:border-box"></div>
<div id="t95" class="t" style="left:1069.0px;top:894.34px;font-size:12px;color:#000;">4,2</div>
<div id="t96" class="t" style="left:1189.0px;top:894.42px;font-size:12.5px;color:#4a4a4a;letter-spacing:-0.019px;">Maximum Cell Voltage</div>
<div class="r" style="left:1065px;top:917px;width:807px;height:1px;background:#dedede"></div>
<div class="r" style="left:1065px;top:922px;width:111px;height:22px;background:#fdf3dc;border:1px solid #c4c4c4;border-radius:3px;box-sizing:border-box"></div>
<div id="t97" class="t" style="left:1069.0px;top:927.34px;font-size:12px;color:#000;">3,5</div>
<div id="t98" class="t" style="left:1189.0px;top:927.42px;font-size:12.5px;color:#4a4a4a;letter-spacing:-0.120px;">Warning Cell Voltage</div>
<div class="r" style="left:1065px;top:950px;width:807px;height:1px;background:#dedede"></div>
<svg class="r" style="left:1858px;top:794px" width="14" height="14" viewBox="0 0 14 14"><circle cx="7" cy="7" r="7" fill="#c4c4c4"/><path d="M4.9 5.3a2.1 2.1 0 1 1 3 1.9c-.7.3-.9.6-.9 1.3v.3" fill="none" stroke="#fff" stroke-width="1.6"/><circle cx="7" cy="10.6" r="0.95" fill="#fff"/></svg>
<svg class="r" style="left:1858px;top:827px" width="14" height="14" viewBox="0 0 14 14"><circle cx="7" cy="7" r="7" fill="#c4c4c4"/><path d="M4.9 5.3a2.1 2.1 0 1 1 3 1.9c-.7.3-.9.6-.9 1.3v.3" fill="none" stroke="#fff" stroke-width="1.6"/><circle cx="7" cy="10.6" r="0.95" fill="#fff"/></svg>
<div class="r" style="left:1065px;top:955px;width:111px;height:22px;background:#fdf3dc;border:1px solid #c4c4c4;border-radius:3px;box-sizing:border-box"></div>
<div id="t99" class="t" style="left:1071.0px;top:960.00px;font-size:13px;color:#000;">mAh</div>
<svg class="r" style="left:1161px;top:963px" width="10" height="7" viewBox="0 0 10 7"><path d="M1 1L5 5L9 1" fill="none" stroke="#000" stroke-width="1.8"/></svg>
<div id="t100" class="t" style="left:1193.0px;top:960.42px;font-size:12.5px;color:#4a4a4a;letter-spacing:-0.021px;">Battery Capacity Unit</div>
</div></div>
<div class="r" style="left:1903px;top:244px;width:17px;height:725px;background:#f0f0f0"></div>
<svg class="r" style="left:1906px;top:250px" width="11" height="6" viewBox="0 0 11 6"><path d="M1 5.5L5.5 1L10 5.5Z" fill="#a0a0a0"/></svg>
<div class="r" style="left:1905px;top:261px;width:13px;height:448px;background:#c1c1c1"></div>
<svg class="r" style="left:1906px;top:957px" width="11" height="6" viewBox="0 0 11 6"><path d="M1 0.5L5.5 5L10 0.5Z" fill="#606060"/></svg>
<div class="r" style="left:204px;top:955px;width:1699px;height:14px;background:linear-gradient(rgba(0,0,0,0),rgba(0,0,0,.045))"></div>
<div class="r" style="left:204px;top:969px;width:1716px;height:50px;background:#eeeeee"></div>
<div class="r" style="left:1781px;top:980px;width:119px;height:30px;background:#37a8db;border-radius:3px"></div>
<div id="t101" class="t" style="left:1790.0px;top:988.92px;font-size:12.5px;color:#fff;font-weight:700;letter-spacing:-0.102px;">Save and Reboot</div>
<div class="r" style="left:0px;top:1019px;width:1920px;height:21px;background:#bfbeb5;border-top:1px solid #8e8d86;box-sizing:border-box"></div>
<div id="t102" class="t" style="left:10.0px;top:1025.27px;font-size:11.5px;color:#474747;letter-spacing:0.398px;">Packet error: 0</div>
<div id="t103" class="t" style="left:113.0px;top:1025.27px;font-size:11.5px;color:#474747;letter-spacing:0.257px;">I2C error: 0</div>
<div id="t104" class="t" style="left:196.0px;top:1025.27px;font-size:11.5px;color:#474747;letter-spacing:0.276px;">Cycle Time: 1006</div>
<div id="t105" class="t" style="left:311.0px;top:1025.27px;font-size:11.5px;color:#474747;letter-spacing:-0.007px;">CPU Load: 5%</div>
<div id="t106" class="t" style="left:409.0px;top:1025.27px;font-size:11.5px;color:#474747;letter-spacing:0.326px;">MSP version: 2</div>
<div id="t107" class="t" style="left:512.0px;top:1025.27px;font-size:11.5px;color:#474747;letter-spacing:0.247px;">MSP load: 0.4</div>
<div id="t108" class="t" style="left:608.0px;top:1025.27px;font-size:11.5px;color:#474747;letter-spacing:0.489px;">MSP round trip: 95</div>
<div id="t109" class="t" style="left:734.0px;top:1025.27px;font-size:11.5px;color:#474747;letter-spacing:0.555px;">HW round trip: 18</div>
<div id="t110" class="t" style="left:854.0px;top:1025.27px;font-size:11.5px;color:#474747;letter-spacing:0.499px;">Drop ratio: 0%</div>
<div id="t111" class="t" style="left:956.0px;top:1025.27px;font-size:11.5px;color:#474747;letter-spacing:-0.062px;">Arming Flags: ARMING_DISABLED_NAVIGATION_UNSAFE, ARMING_DISABLED_RC_LINK</div>
<div class="r" style="left:101px;top:1020px;width:1px;height:20px;background:#8e8d86"></div>
<div class="r" style="left:185px;top:1020px;width:1px;height:20px;background:#8e8d86"></div>
<div class="r" style="left:299px;top:1020px;width:1px;height:20px;background:#8e8d86"></div>
<div class="r" style="left:398px;top:1020px;width:1px;height:20px;background:#8e8d86"></div>
<div class="r" style="left:501px;top:1020px;width:1px;height:20px;background:#8e8d86"></div>
<div class="r" style="left:597px;top:1020px;width:1px;height:20px;background:#8e8d86"></div>
<div class="r" style="left:722px;top:1020px;width:1px;height:20px;background:#8e8d86"></div>
<div class="r" style="left:843px;top:1020px;width:1px;height:20px;background:#8e8d86"></div>
<div class="r" style="left:944px;top:1020px;width:1px;height:20px;background:#8e8d86"></div>
<div class="r" style="left:1443px;top:1020px;width:1px;height:20px;background:#8e8d86"></div>
<div id="t112" class="t" style="left:1883.0px;top:1025.27px;font-size:11.5px;color:#474747;letter-spacing:0.355px;">7.1.0</div>
<div class="r" style="left:0px;top:1040px;width:1920px;height:40px;background:#eeeeee"></div>
<svg class="r" style="left:16px;top:1052px" width="17" height="17" viewBox="0 0 17 17"><path d="M0 2.3L7 1.3V8H0Z M8 1.2L17 0V8H8Z M0 9H7V15.7L0 14.7Z M8 9H17V17L8 15.8Z" fill="#000"/></svg>
<div class="r" style="left:48px;top:1040px;width:287px;height:40px;background:#fff;border:1px solid #d9d9d9;border-bottom:none;box-sizing:border-box"></div>
<svg class="r" style="left:59px;top:1051px" width="19" height="19" viewBox="0 0 19 19"><circle cx="11.5" cy="7" r="5.5" fill="none" stroke="#000" stroke-width="1.2"/><path d="M7.5 11L1 17.5" stroke="#000" stroke-width="1.3"/></svg>
<div id="t113" class="t" style="left:88.0px;top:1053.73px;font-size:14.5px;color:#000;letter-spacing:0.703px;">Поиск</div>
<svg class="r" style="left:257px;top:1040px" width="70" height="40" viewBox="0 0 70 40">
<defs><linearGradient id="bred" x1="0" y1="0" x2="0.3" y2="1"><stop offset="0" stop-color="#fb7a70"/><stop offset="0.6" stop-color="#f57d5c"/><stop offset="1" stop-color="#e9833a"/></linearGradient>
<linearGradient id="road" x1="0" y1="0" x2="1" y2="0"><stop offset="0" stop-color="#dcc9c2"/><stop offset="1" stop-color="#b89a90"/></linearGradient>
<radialGradient id="tree" cx="0.35" cy="0.6" r="0.7"><stop offset="0" stop-color="#8cbf40"/><stop offset="1" stop-color="#3f8a22"/></radialGradient></defs>
<path d="M18 26L70 34V40H14Z" fill="url(#road)"/>
<path d="M18 25.5L45 31L70 35.5V37L45 32.5L18 27Z" fill="#e6d6ce"/>
<path d="M18 26.8L45 32.3L62 39" fill="none" stroke="#8a7068" stroke-width="0.8"/>
<path d="M19 15L26 14V26L19 25Z" fill="#e98a74"/>
<path d="M22 16H25V25H22Z" fill="#f3ece8"/>
<path d="M27 13L30 12.5V26L27 26Z" fill="#f59a6e"/>
<path d="M30 12L37 10.5V27.5L30 26.5Z" fill="#f7b7c0"/>
<path d="M30 23L37 24V27.5L30 26.5Z" fill="#e06a90"/>
<path d="M37 6L45 4V30L37 28Z" fill="#f8d77a"/>
<path d="M45 3L70 0V36L45 31Z" fill="url(#bred)"/>
<path d="M32 19h1.5v7h-1.5zM35 17h1.5v9h-1.5zM38.5 17h1.5v11h-1.5zM42 16h1.8v13h-1.8z" fill="#8a5a55"/>
<path d="M49 15a2.5 2.5 0 0 1 5 0V32H49Z" fill="#fde2c0"/><path d="M49.8 15.5a1.7 1.7 0 0 1 3.4 0V31.5H49.8Z" fill="#7a4a48"/>
<path d="M60 12H65V31H60Z" fill="#fde2c0"/><path d="M60.8 13H64.2V30H60.8Z" fill="#8a5856"/>
<path d="M40 6Q46 1 52 4Q58 0 66 3L64 6Q58 3 54 6L53 9Q50 5 46 7L44 10Z" fill="#5aa832"/>
<ellipse cx="9" cy="21" rx="8.5" ry="8.8" fill="url(#tree)"/>
<path d="M7.5 28L8.5 40H11L11.5 28L13.5 26L11 27.5L9.5 27L8 26Z" fill="#7a4a1e"/>
</svg>
<svg class="r" style="left:351px;top:1051px" width="18" height="17" viewBox="0 0 18 17"><g fill="none" stroke="#000" stroke-width="1.1"><path d="M0.5 3V1.5H11.5V3M0.5 14V15.5H11.5V14"/><rect x="1.5" y="5.5" width="9" height="6"/><path d="M16 1V3.5M16 8V16"/></g><rect x="14.8" y="4.8" width="2.5" height="2.4" fill="#000"/></svg>
<svg class="r" style="left:400px;top:1050px" width="22" height="19" viewBox="0 0 22 19"><path d="M0 1.5Q0 0.8 0.8 0.8H8.5L10 2.5V5H0Z" fill="#e9a623"/><path d="M0 4H21.5V18.5H0Z" fill="#fdd663"/><path d="M0 4H21.5V6H0Z" fill="#f7c542"/><path d="M4 10H17.5V18.5H13.5V13.5H8V18.5H4Z" fill="#2f8fe0"/></svg>
<svg class="r" style="left:448px;top:1049px" width="23" height="23" viewBox="0 0 23 23"><defs><linearGradient id="stg" x1="0" y1="0" x2="0" y2="1"><stop offset="0" stop-color="#1f6cc0"/><stop offset="1" stop-color="#173c6c"/></linearGradient></defs><path d="M6.5 5V1.2H16.5V5" fill="none" stroke="#35b6f2" stroke-width="1.8"/><path d="M0.5 4.5H22.5V19.5Q22.5 22.5 19.5 22.5H3.5Q0.5 22.5 0.5 19.5Z" fill="url(#stg)"/><rect x="7" y="9" width="4.2" height="4.2" fill="#f25022"/><rect x="12" y="9" width="4.2" height="4.2" fill="#7fba00"/><rect x="7" y="14" width="4.2" height="4.2" fill="#00a4ef"/><rect x="12" y="14" width="4.2" height="4.2" fill="#ffb900"/></svg>
<svg class="r" style="left:496px;top:1049px" width="26" height="23" viewBox="0 0 26 23"><ellipse cx="11" cy="8.5" rx="10.3" ry="5.8" transform="rotate(-18 11 8.5)" fill="none" stroke="#e84a4a" stroke-width="1.1"/><path d="M12 1.5L15.5 14M8 7L17 13" stroke="#8a8a8a" stroke-width="1.3"/><circle cx="15.5" cy="18" r="2.6" fill="none" stroke="#3a8fd8" stroke-width="1.6"/><circle cx="21.5" cy="15" r="2.6" fill="none" stroke="#3a8fd8" stroke-width="1.6"/></svg>
<svg class="r" style="left:546px;top:1048px" width="24" height="24" viewBox="0 0 24 24"><rect x="7" y="1" width="17" height="21" rx="1" fill="#1490df"/><rect x="15" y="1" width="9" height="9" fill="#28a8ea"/><path d="M7 11L24 22H7Z" fill="#0a5aa8"/><path d="M24 11V22H7Z" fill="#1f7fd0"/><rect x="0" y="5.5" width="12.5" height="12.5" rx="1" fill="#0f6cbd"/><ellipse cx="6.2" cy="11.8" rx="3" ry="3.6" fill="none" stroke="#fff" stroke-width="1.7"/></svg>
<svg class="r" style="left:595px;top:1051px" width="24" height="18" viewBox="0 0 24 18"><path d="M0.5 9L11 14L23.5 7L23 11L11 17.5L0.5 12.5Z" fill="#7a4a2a"/><path d="M0.5 9Q3 3 8 3Q11 4 11.5 6Q14 2 19 1.5Q22 3 23.5 7L11.5 14Z" fill="#efe0b8"/><path d="M11.5 6V14M3 8Q6 5 10 6.5M14 5Q17 3 21 4.5M3.5 10Q6 8 10 9M14 8Q17 6 21.5 7.5" fill="none" stroke="#a08050" stroke-width="0.7"/><path d="M16 9L17 17L18 13L19 16L18.5 9Z" fill="#c83030"/></svg>
<svg class="r" style="left:644px;top:1048px" width="24" height="24" viewBox="0 0 24 24"><circle cx="12" cy="12" r="11.5" fill="#db4437"/><path d="M12 12L2.05 6.25A11.5 11.5 0 0 0 12 23.5Z" fill="#0f9d58"/><path d="M12 12L12 23.5A11.5 11.5 0 0 0 21.95 6.25Z" fill="#ffcd40"/><circle cx="12" cy="12" r="5.3" fill="#fff"/><circle cx="12" cy="12" r="4.2" fill="#4285f4"/></svg>
<div class="r" style="left:685px;top:1078px;width:152px;height:2px;background:#1a73d2"></div>
<svg class="r" style="left:690px;top:1048px" width="25" height="24" viewBox="0 0 25 24"><rect x="7" y="2" width="18" height="20" rx="1.5" fill="#41a5ee"/><rect x="7" y="12" width="18" height="10" fill="#185abd"/><rect x="0" y="6" width="13" height="13" rx="1.5" fill="#185abd"/><path d="M2.5 9L4.3 16L6.5 10L8.7 16L10.5 9" fill="none" stroke="#fff" stroke-width="1.3"/></svg>
<div id="t114" class="t" style="left:719.0px;top:1053.84px;font-size:12px;color:#000;letter-spacing:-0.297px;">Anastasia Y7 (1)&nbsp; -&nbsp; ...</div>
<div class="r" style="left:846px;top:1078px;width:152px;height:2px;background:#1a73d2"></div>
<svg class="r" style="left:852px;top:1048px" width="24" height="24" viewBox="0 0 24 24"><circle cx="12" cy="12" r="11.5" fill="#db4437"/><path d="M12 12L2.05 6.25A11.5 11.5 0 0 0 12 23.5Z" fill="#0f9d58"/><path d="M12 12L12 23.5A11.5 11.5 0 0 0 21.95 6.25Z" fill="#ffcd40"/><circle cx="12" cy="12" r="5.3" fill="#fff"/><circle cx="12" cy="12" r="4.2" fill="#4285f4"/></svg>
<svg class="r" style="left:862px;top:1060px" width="14" height="16" viewBox="0 0 14 16"><circle cx="7" cy="8" r="6.5" fill="#e9e2dc" stroke="#fff" stroke-width="1"/><circle cx="7" cy="6.5" r="2.5" fill="#c9a08a"/><path d="M2.5 13a4.5 3.5 0 0 1 9 0" fill="#7a8a9a"/></svg>
<div id="t115" class="t" style="left:880.0px;top:1053.84px;font-size:12px;color:#000;letter-spacing:-0.013px;">Автопилот iNav по...</div>
<div class="r" style="left:1003px;top:1040px;width:160px;height:40px;background:#f7f7f7"></div>
<div class="r" style="left:1003px;top:1078px;width:160px;height:2px;background:#1a73d2"></div>
<svg class="r" style="left:1013px;top:1048px" width="23" height="23" viewBox="0 0 23 23"><rect width="23" height="23" rx="2" fill="#34a8df"/><g fill="none" stroke="#eaf7fd" stroke-width="1.2"><circle cx="7" cy="7" r="3.5"/><circle cx="16" cy="7" r="3.5"/><circle cx="7" cy="16" r="3.5"/><circle cx="16" cy="16" r="3.5"/></g><circle cx="11.5" cy="11.5" r="1.6" fill="#fff"/></svg>
<div id="t116" class="t" style="left:1041.5px;top:1053.84px;font-size:12px;color:#000;letter-spacing:-0.031px;">INAV Configurator</div>
<svg class="r" style="left:1543px;top:1049px" width="22" height="22" viewBox="0 0 22 22"><defs><linearGradient id="sun" x1="0.15" y1="0.1" x2="0.85" y2="0.9"><stop offset="0" stop-color="#f5c02a"/><stop offset="0.5" stop-color="#f39019"/><stop offset="1" stop-color="#ea5a0c"/></linearGradient></defs><circle cx="11" cy="11" r="10.3" fill="url(#sun)"/></svg>
<div id="t117" class="t" style="left:1575.0px;top:1053.15px;font-size:14px;color:#000;transform:scaleX(0.8791);transform-origin:0 0;">18°C</div>
<div id="t118" class="t" style="left:1612.5px;top:1053.15px;font-size:14px;color:#000;transform:scaleX(0.9445);transform-origin:0 0;">Sunny</div>
<svg class="r" style="left:1674px;top:1054px" width="14" height="9" viewBox="0 0 14 9"><path d="M1 8L7 2L13 8" fill="none" stroke="#000" stroke-width="1.3"/></svg>
<svg class="r" style="left:1696px;top:1053px" width="18" height="12" viewBox="0 0 18 12"><defs><linearGradient id="cl" x1="0" y1="0" x2="0" y2="1"><stop offset="0" stop-color="#c8c8c8"/><stop offset="1" stop-color="#8a8a8a"/></linearGradient></defs><path d="M4 11.3a3.3 3.3 0 0 1-0.3-6.6a5 5 0 0 1 9.4-1.4a4 4 0 0 1 0.9 8Z" fill="url(#cl)" stroke="#2a2a2a" stroke-width="1"/></svg>
<svg class="r" style="left:1722px;top:1051px" width="17" height="17" viewBox="0 0 17 17"><g fill="none" stroke="#333" stroke-width="1.2"><path d="M2 16a14 14 0 0 1 14-14" stroke="#aaa"/><path d="M5 16a11 11 0 0 1 11-11"/><path d="M8 16a8 8 0 0 1 8-8"/><path d="M11 16a5 5 0 0 1 5-5"/></g><circle cx="15" cy="15" r="1.5" fill="#000"/></svg>
<svg class="r" style="left:1744px;top:1051px" width="18" height="18" viewBox="0 0 18 18"><path d="M1 6H4L8 2V16L4 12H1Z" fill="none" stroke="#000" stroke-width="1.2"/><path d="M11 6a4 4 0 0 1 0 6M13 4a7 7 0 0 1 0 10" fill="none" stroke="#666" stroke-width="1.1"/></svg>
<div id="t119" class="t" style="left:1771.5px;top:1053.84px;font-size:12px;color:#000;transform:scaleX(0.8456);transform-origin:0 0;">ENG</div>
<div id="t120" class="t" style="left:1823.0px;top:1044.84px;font-size:12px;color:#000;transform:scaleX(0.8990);transform-origin:0 0;">9:24</div>
<div id="t121" class="t" style="left:1807.0px;top:1062.34px;font-size:12px;color:#000;transform:scaleX(0.8991);transform-origin:0 0;">05.05.2024</div>
<svg class="r" style="left:1878px;top:1051px" width="19" height="18" viewBox="0 0 19 18"><path d="M1 1H18V13H8L4 17V13H1Z" fill="#000"/><path d="M4 4.5H15M4 7.5H15M4 10.5H11" stroke="#fff" stroke-width="1"/><circle cx="15.5" cy="13.5" r="3" fill="#fff" stroke="#000" stroke-width="1"/></svg>
</body></html>
